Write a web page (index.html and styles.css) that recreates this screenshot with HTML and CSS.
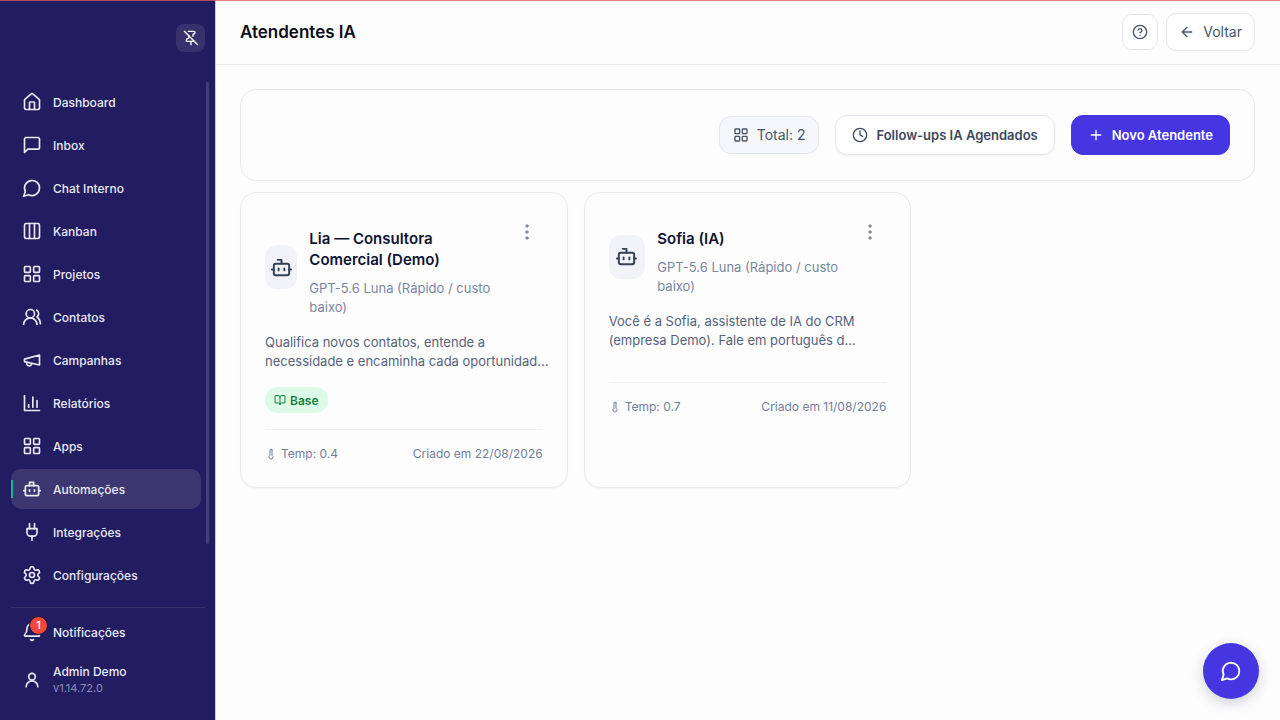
FILE: index.html
```html
<!DOCTYPE html>
<html lang="pt-BR">
<head>
    <meta charset="UTF-8">
    <meta name="viewport" content="width=device-width, initial-scale=1.0">
    <title>Atendentes IA</title>
    <link rel="stylesheet" href="styles.css">
</head>
<body>
    <!-- Icons -->
    <svg class="sprite" aria-hidden="true">
        <symbol id="i-grid" viewBox="0 0 24 24"><rect x="3" y="3" width="7" height="7" rx="1"/><rect x="14" y="3" width="7" height="7" rx="1"/><rect x="14" y="14" width="7" height="7" rx="1"/><rect x="3" y="14" width="7" height="7" rx="1"/></symbol>
        <symbol id="i-bot" viewBox="0 0 24 24"><path d="M12 8V4H8"/><rect x="4" y="8" width="16" height="12" rx="2"/><path d="M2 14h2M20 14h2M15 13v2M9 13v2"/></symbol>
        <symbol id="i-chat" viewBox="0 0 24 24"><path d="M7.9 20A9 9 0 1 0 4 16.1L2 22Z"/></symbol>
        <symbol id="i-temp" viewBox="0 0 24 24"><path d="M14 4v10.54a4 4 0 1 1-4 0V4a2 2 0 0 1 4 0Z"/></symbol>
        <symbol id="i-dots" viewBox="0 0 24 24"><circle cx="12" cy="3" r="2"/><circle cx="12" cy="12" r="2"/><circle cx="12" cy="21" r="2"/></symbol>
    </svg>

    <div class="app">
        <aside class="sidebar">
            <button class="pin-btn" type="button" aria-label="Desafixar menu">
                <svg class="icon" viewBox="0 0 24 24"><path d="M12 17v5"/><path d="M15 9.34V7a1 1 0 0 1 1-1 2 2 0 0 0 0-4H7.89"/><path d="m2 2 20 20"/><path d="M9 9v1.76a2 2 0 0 1-1.11 1.79l-1.78.9A2 2 0 0 0 5 15.24V16a1 1 0 0 0 1 1h11"/></svg>
            </button>

            <nav class="nav">
                <a href="#" class="nav-item"><svg class="icon" viewBox="0 0 24 24"><path d="M15 21v-8a1 1 0 0 0-1-1h-4a1 1 0 0 0-1 1v8"/><path d="M3 10a2 2 0 0 1 .709-1.528l7-5.999a2 2 0 0 1 2.582 0l7 5.999A2 2 0 0 1 21 10v9a2 2 0 0 1-2 2H5a2 2 0 0 1-2-2z"/></svg><span>Dashboard</span></a>
                <a href="#" class="nav-item"><svg class="icon" viewBox="0 0 24 24"><path d="M21 15a2 2 0 0 1-2 2H7l-4 4V5a2 2 0 0 1 2-2h14a2 2 0 0 1 2 2z"/></svg><span>Inbox</span></a>
                <a href="#" class="nav-item"><svg class="icon"><use href="#i-chat"/></svg><span>Chat Interno</span></a>
                <a href="#" class="nav-item"><svg class="icon" viewBox="0 0 24 24"><rect x="3" y="3" width="18" height="18" rx="2"/><path d="M9 3v18M15 3v18"/></svg><span>Kanban</span></a>
                <a href="#" class="nav-item"><svg class="icon"><use href="#i-grid"/></svg><span>Projetos</span></a>
                <a href="#" class="nav-item"><svg class="icon" viewBox="0 0 24 24"><path d="M18 21a8 8 0 0 0-16 0"/><circle cx="10" cy="8" r="5"/><path d="M22 20c0-3.37-2-6.5-4-8a5 5 0 0 0-.45-8.3"/></svg><span>Contatos</span></a>
                <a href="#" class="nav-item"><svg class="icon" viewBox="0 0 24 24"><path d="m3 11 18-5v12L3 14v-3z"/><path d="M11.6 16.8a3 3 0 1 1-5.8-1.6"/></svg><span>Campanhas</span></a>
                <a href="#" class="nav-item"><svg class="icon" viewBox="0 0 24 24"><path d="M3 3v18h18"/><path d="M18 17V9M13 17V5M8 17v-3"/></svg><span>Relatórios</span></a>
                <a href="#" class="nav-item"><svg class="icon"><use href="#i-grid"/></svg><span>Apps</span></a>
                <a href="#" class="nav-item active"><svg class="icon" viewBox="0 0 24 24"><path d="M9 8V4h5v4"/><rect x="4" y="8" width="16" height="12" rx="2"/><path d="M2 14h2M20 14h2M15 13v2M9 13v2"/></svg><span>Automações</span></a>
                <a href="#" class="nav-item"><svg class="icon" viewBox="0 0 24 24"><path d="M12 22v-5M9 8V2M15 8V2"/><path d="M18 8v5a4 4 0 0 1-4 4h-4a4 4 0 0 1-4-4V8Z"/></svg><span>Integrações</span></a>
                <a href="#" class="nav-item"><svg class="icon" viewBox="0 0 24 24"><path d="M9.671 4.136a2.34 2.34 0 0 1 4.659 0 2.34 2.34 0 0 0 3.319 1.915 2.34 2.34 0 0 1 2.33 4.033 2.34 2.34 0 0 0 0 3.831 2.34 2.34 0 0 1-2.33 4.033 2.34 2.34 0 0 0-3.319 1.915 2.34 2.34 0 0 1-4.659 0 2.34 2.34 0 0 0-3.32-1.915 2.34 2.34 0 0 1-2.33-4.033 2.34 2.34 0 0 0 0-3.831A2.34 2.34 0 0 1 6.35 6.051a2.34 2.34 0 0 0 3.319-1.915"/><circle cx="12" cy="12" r="3"/></svg><span>Configurações</span></a>
            </nav>

            <div class="sidebar-footer">
                <a href="#" class="nav-item">
                    <span class="bell">
                        <svg class="icon" viewBox="0 0 24 24"><path d="M10.268 21a2 2 0 0 0 3.464 0"/><path d="M3.262 15.326A1 1 0 0 0 4 17h16a1 1 0 0 0 .74-1.673C19.41 13.956 18 12.499 18 8A6 6 0 0 0 6 8c0 4.499-1.411 5.956-2.738 7.326"/></svg>
                        <span class="badge">1</span>
                    </span>
                    <span>Notificações</span>
                </a>
                <a href="#" class="nav-item">
                    <svg class="icon" viewBox="0 0 24 24"><circle cx="12" cy="8" r="4"/><path d="M19 20a7 7 0 0 0-14 0"/></svg>
                    <span class="user">
                        <span>Admin Demo</span>
                        <small class="version">v1.14.72.0</small>
                    </span>
                </a>
            </div>
        </aside>

        <main class="main">
            <header class="topbar">
                <h1 class="page-title">Atendentes IA</h1>
                <div class="topbar-actions">
                    <button class="btn btn-icon" type="button" aria-label="Ajuda">
                        <svg class="icon" viewBox="0 0 24 24"><circle cx="12" cy="12" r="10"/><path d="M9.09 9a3 3 0 0 1 5.83 1c0 2-3 3-3 3M12 17h.01"/></svg>
                    </button>
                    <a href="#" class="btn btn-back">
                        <svg class="icon" viewBox="0 0 24 24"><path d="m12 19-7-7 7-7M19 12H5"/></svg>
                        Voltar
                    </a>
                </div>
            </header>

            <div class="content">
                <!-- Toolbar -->
                <section class="toolbar">
                    <div class="btn total">
                        <svg class="icon"><use href="#i-grid"/></svg>
                        Total: 2
                    </div>
                    <button class="btn btn-outline" type="button">
                        <svg class="icon" viewBox="0 0 24 24"><circle cx="12" cy="12" r="10"/><path d="M12 6v6l4 2"/></svg>
                        Follow-ups IA Agendados
                    </button>
                    <button class="btn btn-primary" type="button">
                        <svg class="icon" viewBox="0 0 24 24"><path d="M5 12h14M12 5v14"/></svg>
                        Novo Atendente
                    </button>
                </section>

                <!-- Agents -->
                <section class="agents">
                    <article class="card">
                        <div class="card-header">
                            <div class="agent">
                                <div class="avatar"><svg class="icon"><use href="#i-bot"/></svg></div>
                                <div class="agent-info">
                                    <h2 class="agent-name">Lia — Consultora Comercial (Demo)</h2>
                                    <p class="agent-model">GPT-5.6 Luna (Rápido / custo baixo)</p>
                                </div>
                            </div>
                            <button class="menu-btn" type="button" aria-label="Opções"><svg class="icon"><use href="#i-dots"/></svg></button>
                        </div>
                        <p class="desc">Qualifica novos contatos, entende a necessidade e encaminha cada oportunidad...</p>
                        <div class="tags">
                            <span class="tag">
                                <svg class="icon" viewBox="0 0 24 24"><path d="M12 7v14"/><path d="M3 18a1 1 0 0 1-1-1V4a1 1 0 0 1 1-1h5a4 4 0 0 1 4 4 4 4 0 0 1 4-4h5a1 1 0 0 1 1 1v13a1 1 0 0 1-1 1h-6a3 3 0 0 0-3 3 3 3 0 0 0-3-3z"/></svg>
                                Base
                            </span>
                        </div>
                        <div class="card-footer">
                            <span class="temp"><svg class="icon"><use href="#i-temp"/></svg>Temp: 0.4</span>
                            <span>Criado em 22/08/2026</span>
                        </div>
                    </article>

                    <article class="card">
                        <div class="card-header">
                            <div class="agent">
                                <div class="avatar"><svg class="icon"><use href="#i-bot"/></svg></div>
                                <div class="agent-info">
                                    <h2 class="agent-name">Sofia (IA)</h2>
                                    <p class="agent-model">GPT-5.6 Luna (Rápido / custo baixo)</p>
                                </div>
                            </div>
                            <button class="menu-btn" type="button" aria-label="Opções"><svg class="icon"><use href="#i-dots"/></svg></button>
                        </div>
                        <p class="desc">Você é a Sofia, assistente de IA do CRM (empresa Demo). Fale em português d...</p>
                        <div class="tags"></div>
                        <div class="card-footer">
                            <span class="temp"><svg class="icon"><use href="#i-temp"/></svg>Temp: 0.7</span>
                            <span>Criado em 11/08/2026</span>
                        </div>
                    </article>
                </section>
            </div>
        </main>
    </div>

    <button class="chat-fab" type="button" aria-label="Abrir chat"><svg class="icon"><use href="#i-chat"/></svg></button>
</body>
</html>
```
FILE: styles.css
```css
* { box-sizing: border-box; }
body { font-family: 'Inter', sans-serif; margin: 0; background: #fdfdfe; color: #475569; font-size: 13px; }
body::before { content: ''; position: fixed; top: 0; left: 0; right: 0; height: 1px; background: rgba(220, 90, 90, 0.75); z-index: 10; }
h1, h2, p { margin: 0; }
a { color: inherit; text-decoration: none; }
button { font-family: inherit; cursor: pointer; }

.sprite { display: none; }
.icon { width: 16px; height: 16px; flex-shrink: 0; fill: none; stroke: currentColor; stroke-width: 2; stroke-linecap: round; stroke-linejoin: round; }

.app { display: flex; min-height: 100vh; }

/* Sidebar */
.sidebar { width: 216px; flex-shrink: 0; display: flex; flex-direction: column; padding: 24px 10px 0 11px; background: #221d61; border-right: 1px solid #c9c8dc; color: #e9e8f4; }
.pin-btn { align-self: flex-end; display: flex; align-items: center; justify-content: center; width: 29px; height: 28px; margin-bottom: 30px; padding: 0; border: none; border-radius: 8px; background: #37326c; color: #fff; }
.nav { position: relative; flex: 1; display: flex; flex-direction: column; gap: 3px; padding-right: 4px; }
.nav::after { content: ''; position: absolute; top: 0; right: -4px; width: 3px; height: 462px; border-radius: 2px; background: #433f7b; }
.nav-item { position: relative; display: flex; align-items: center; gap: 11px; height: 40px; padding: 0 11px; border-radius: 10px; font-size: 12px; font-weight: 500; }
.nav-item .icon { width: 20px; height: 20px; }
.nav-item.active { background: #3c3770; }
.nav-item.active::before { content: ''; position: absolute; left: 0; top: 11px; width: 2px; height: 18px; background: #10b994; }
.sidebar-footer { display: flex; flex-direction: column; gap: 4px; padding: 4px 0 16px; border-top: 1px solid #37336f; }
.bell { position: relative; display: flex; }
.badge { position: absolute; left: 7px; top: -6px; width: 19px; height: 19px; border: 1px solid #17133f; border-radius: 50%; background: #f4473c; color: #fff; font-size: 11px; line-height: 17px; text-align: center; }
.user { display: flex; flex-direction: column; line-height: 17px; }
.version { color: #8f8cb8; font-size: 11px; font-weight: 400; }
.sidebar-footer .nav-item + .nav-item { height: 48px; }

/* Topbar */
.main { flex: 1; min-width: 0; }
.topbar { display: flex; align-items: center; justify-content: space-between; height: 65px; padding: 0 25px 0 24px; border-bottom: 1px solid #e8e9ee; }
.page-title { color: #0b0d17; font-size: 17px; font-weight: 600; line-height: 24px; }
.topbar-actions { display: flex; align-items: center; gap: 8px; }

.btn { display: inline-flex; align-items: center; justify-content: center; gap: 8px; height: 40px; padding: 0 16px; border: 1px solid #e5e7ef; border-radius: 12px; background: #fff; color: #475569; font-size: 14px; line-height: 20px; white-space: nowrap; }
.btn-icon { width: 36px; height: 36px; padding: 0; border-radius: 10px; }
.btn-back { padding: 0 12px; height: 38px; border-radius: 10px; }
.total { padding: 0 13px; height: 38px; background: #f5f7fa; }
.btn-outline { box-shadow: 0 1px 2px rgba(15, 23, 42, 0.05); color: #3b495d; font-size: 13px; font-weight: 600; }
.btn-primary { border-color: #4636e2; background: #4636e2; color: #fff; font-size: 13px; font-weight: 600; }

/* Content */
.content { display: flex; flex-direction: column; gap: 11px; padding: 24px 25px 24px 24px; }
.toolbar { display: flex; align-items: center; justify-content: flex-end; gap: 16px; min-height: 92px; padding: 24px; border: 1px solid #e8e9ef; border-radius: 16px; }
.agents { display: grid; grid-template-columns: repeat(3, 1fr); gap: 16px; }
.card { padding: 24px; border: 1px solid #e8e9ef; border-radius: 16px; box-shadow: 0 1px 2px rgba(15, 23, 42, 0.04); }
.card-header { display: flex; align-items: flex-start; justify-content: space-between; gap: 12px; }
.agent { display: flex; align-items: center; gap: 12px; min-width: 0; }
.avatar { display: flex; align-items: center; justify-content: center; width: 44px; height: 44px; min-width: 0; border-radius: 12px; background: #f1f3f8; color: #334155; }
.avatar .icon { width: 23px; height: 23px; }
.agent-info { min-width: 0; padding-top: 11px; }
.agent-name { color: #0f1230; font-size: 15px; font-weight: 600; line-height: 21px; }
.agent-model { margin-top: 9px; color: #7a87a0; line-height: 19px; }
.menu-btn { display: flex; align-items: center; justify-content: center; flex-shrink: 0; width: 32px; height: 30px; padding: 0; border: none; background: none; color: #7e8ca5; }
.menu-btn .icon { fill: currentColor; stroke-width: 1; }
.desc { margin: 16px -8px 0 0; line-height: 19px; color: #56637a; }
.tags { display: flex; margin: 16px 0; }
.tag { display: inline-flex; align-items: center; gap: 4px; height: 26px; padding: 0 9px; border-radius: 13px; background: #dcfae6; color: #15803d; font-size: 12px; font-weight: 600; }
.tag .icon { width: 12px; height: 12px; }
.card-footer { display: flex; align-items: center; justify-content: space-between; padding-top: 15px; border-top: 1px solid #f0f1f6; color: #73809a; font-size: 12px; line-height: 18px; }
.temp { display: flex; align-items: center; gap: 4px; }
.temp .icon { width: 12px; height: 12px; }

/* Floating chat */
.chat-fab { position: fixed; right: 21px; bottom: 21px; display: flex; align-items: center; justify-content: center; width: 56px; height: 56px; padding: 0; border: none; border-radius: 50%; background: #4636e2; color: #fff; box-shadow: 0 4px 14px rgba(15, 23, 42, 0.2); }
.chat-fab .icon { width: 22px; height: 22px; }
```
